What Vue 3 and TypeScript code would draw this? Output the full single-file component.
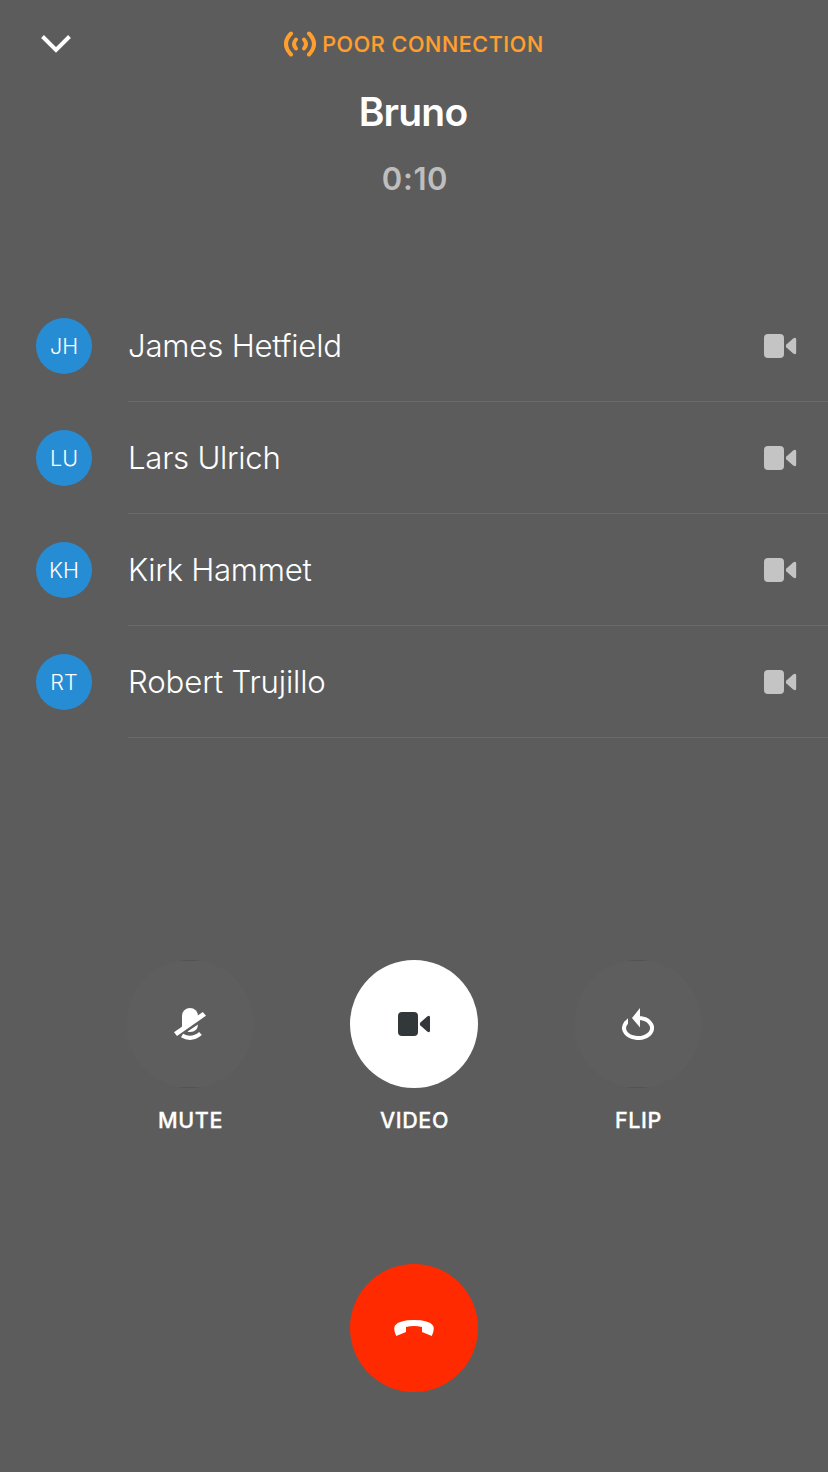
<script setup lang="ts">
interface Participant {
  initials: string
  name: string
  spacing: string
}

const participants: Participant[] = [
  { initials: 'JH', name: 'James Hetfield', spacing: 'fit-a' },
  { initials: 'LU', name: 'Lars Ulrich', spacing: 'fit-b' },
  { initials: 'KH', name: 'Kirk Hammet', spacing: 'fit-c' },
  { initials: 'RT', name: 'Robert Trujillo', spacing: 'fit-d' },
]
</script>

<template>
  <main class="call">
    <header class="top">
      <button class="collapse" aria-label="Minimize">
        <svg width="32" height="20" viewBox="0 0 32 20">
          <path d="M2.500 2.500 16 16 29.500 2.500" fill="none" stroke="#fff" stroke-width="4" />
        </svg>
      </button>
      <div class="status">
        <svg width="32" height="26" viewBox="0 0 32 26" fill="none" stroke="#ff9f2e" stroke-width="4" stroke-linecap="round">
          <path d="M7 2.500Q-3 13 7 23.500" />
          <path d="M25 2.500Q35 13 25 23.500" />
          <path d="M12 8.500Q8 13 12 17.500" />
          <path d="M20 8.500Q24 13 20 17.500" />
        </svg>
        <span class="status-text">POOR CONNECTION</span>
      </div>
    </header>

    <h1 class="title">Bruno</h1>
    <div class="timer">0:10</div>

    <ul class="people">
      <li v-for="p in participants" :key="p.initials" class="person">
        <span class="avatar">{{ p.initials }}</span>
        <div class="person-body">
          <span class="person-name" :class="p.spacing">{{ p.name }}</span>
          <svg class="camera" width="34" height="24" viewBox="0 0 34 24" fill="#c4c4c4">
            <rect width="20" height="24" rx="4" />
            <path d="M22.400 10.600 29.200 4.500Q32.200 2.800 32.200 5.600V18.400Q32.200 21.200 29.200 19.500L22.400 13.400Q21.300 12 22.400 10.600Z" />
          </svg>
        </div>
      </li>
    </ul>

    <section class="controls">
      <div class="control">
        <button class="round faint" aria-label="Mute">
          <svg width="32" height="32" viewBox="0 0 32 32" fill="#fff">
            <path d="M8 20V8A8 8 0 0 1 24 8L22 12Z" />
            <path d="M0 24.200 28.800 4 32 7.700 3 28Z" />
            <path d="M13.500 23.500 24 16.500Q23.500 24 16 24Q14.700 24 13.500 23.500Z" />
            <path d="M8 27.500Q17.500 33 26.500 25.500" fill="none" stroke="#fff" stroke-width="4.200" />
          </svg>
        </button>
        <span class="label">MUTE</span>
      </div>
      <div class="control">
        <button class="round solid" aria-label="Video">
          <svg width="32" height="24" viewBox="0 0 32 24" fill="#32373a">
            <rect width="20" height="24" rx="4" />
            <path d="M22.400 10.600 29.200 4.500Q32 2.800 32 5.600V18.400Q32 21.200 29.200 19.500L22.400 13.400Q21.300 12 22.400 10.600Z" />
          </svg>
        </button>
        <span class="label">VIDEO</span>
      </div>
      <div class="control">
        <button class="round faint" aria-label="Flip">
          <svg width="32" height="32" viewBox="0 0 32 32">
            <path d="M4.100 14.800A14 10 0 1 0 18 10.100" fill="none" stroke="#fff" stroke-width="4" />
            <path d="M18 0V19.500L10 10ZM6 10.300V15.800L4 17.500 1.800 14.200Z" fill="#fff" />
          </svg>
        </button>
        <span class="label">FLIP</span>
      </div>
    </section>

    <div class="hangup-row">
      <button class="round hangup" aria-label="End call">
        <svg width="40" height="16" viewBox="0 0 40 16" fill="#fff">
          <path d="M2.200 16Q-1 9 1 5.500Q5 0 20 0Q35 0 39 5.500Q41 9 37.800 16L28 12V7Q20 5 12 7V12Z" />
        </svg>
      </button>
    </div>
  </main>
</template>

<style>
html,
body {
  margin: 0;
  background: #5c5c5c;
}
</style>

<style scoped>
.call {
  box-sizing: border-box;
  width: 828px;
  height: 1472px;
  display: flex;
  flex-direction: column;
  overflow: hidden;
  background: #5c5c5c;
  color: #fff;
  font-family: Inter, "Liberation Sans", sans-serif;
}
button {
  border: 0;
  padding: 0;
  background: none;
}
svg {
  display: block;
  flex: none;
}
.top {
  height: 88px;
  display: grid;
  grid-template-columns: 72px 1fr 72px;
  align-items: center;
}
.collapse {
  padding-left: 40px;
}
.status {
  display: flex;
  justify-content: center;
  align-items: center;
  gap: 6px;
  color: #ff9f2e;
}
.status-text {
  font-size: 21.5px;
  line-height: 28px;
  font-weight: 500;
  letter-spacing: 0.6px;
  -webkit-text-stroke: 0.2px #ff9f2e;
}
.title {
  margin: 0;
  height: 48px;
  line-height: 48px;
  text-align: center;
  font-size: 39px;
  font-weight: 600;
  letter-spacing: -0.8px;
  padding-right: 2px;
}
.timer {
  margin-top: 23px;
  height: 40px;
  line-height: 40px;
  text-align: center;
  font-size: 31px;
  font-weight: 600;
  letter-spacing: 0.6px;
  padding-left: 2px;
  color: #bebebe;
}
.people {
  list-style: none;
  margin: 91px 0 0;
  padding: 0;
}
.person {
  height: 112px;
  display: flex;
  align-items: center;
  padding-left: 36px;
}
.avatar {
  width: 56px;
  height: 56px;
  border-radius: 50%;
  background: #268dd5;
  text-align: center;
  font-size: 21.5px;
  line-height: 57px;
  font-weight: 300;
}
.person-body {
  flex: 1;
  box-sizing: border-box;
  height: 112px;
  margin-left: 36px;
  padding-right: 30px;
  border-bottom: 1px solid #6b6b6b;
  display: flex;
  align-items: center;
  justify-content: space-between;
}
.person-name {
  font-size: 31.2px;
  line-height: 40px;
  font-weight: 300;
}
.fit-a {
  letter-spacing: -0.22px;
}
.fit-b {
  letter-spacing: -0.28px;
}
.fit-c {
  letter-spacing: -0.3px;
}
.fit-d {
  letter-spacing: -0.14px;
}
.controls {
  margin-top: 222px;
  padding: 0 78px;
  display: grid;
  grid-template-columns: repeat(3, 224px);
}
.control {
  display: flex;
  flex-direction: column;
  align-items: center;
}
.round {
  width: 128px;
  height: 128px;
  border-radius: 50%;
  display: flex;
  align-items: center;
  justify-content: center;
}
.faint {
  background:
    linear-gradient(#525252, #525252) top / 22px 1px no-repeat,
    linear-gradient(#525252, #525252) bottom / 22px 1px no-repeat,
    #5e5e5e;
}
.solid {
  background: #fff;
}
.label {
  margin-top: 18px;
  padding-left: 1px;
  font-size: 21.5px;
  line-height: 28px;
  font-weight: 500;
  letter-spacing: 0.6px;
  -webkit-text-stroke: 0.3px #fff;
}
.hangup-row {
  margin-top: 130px;
  display: flex;
  justify-content: center;
}
.hangup {
  background: #ff2a00;
}
</style>
